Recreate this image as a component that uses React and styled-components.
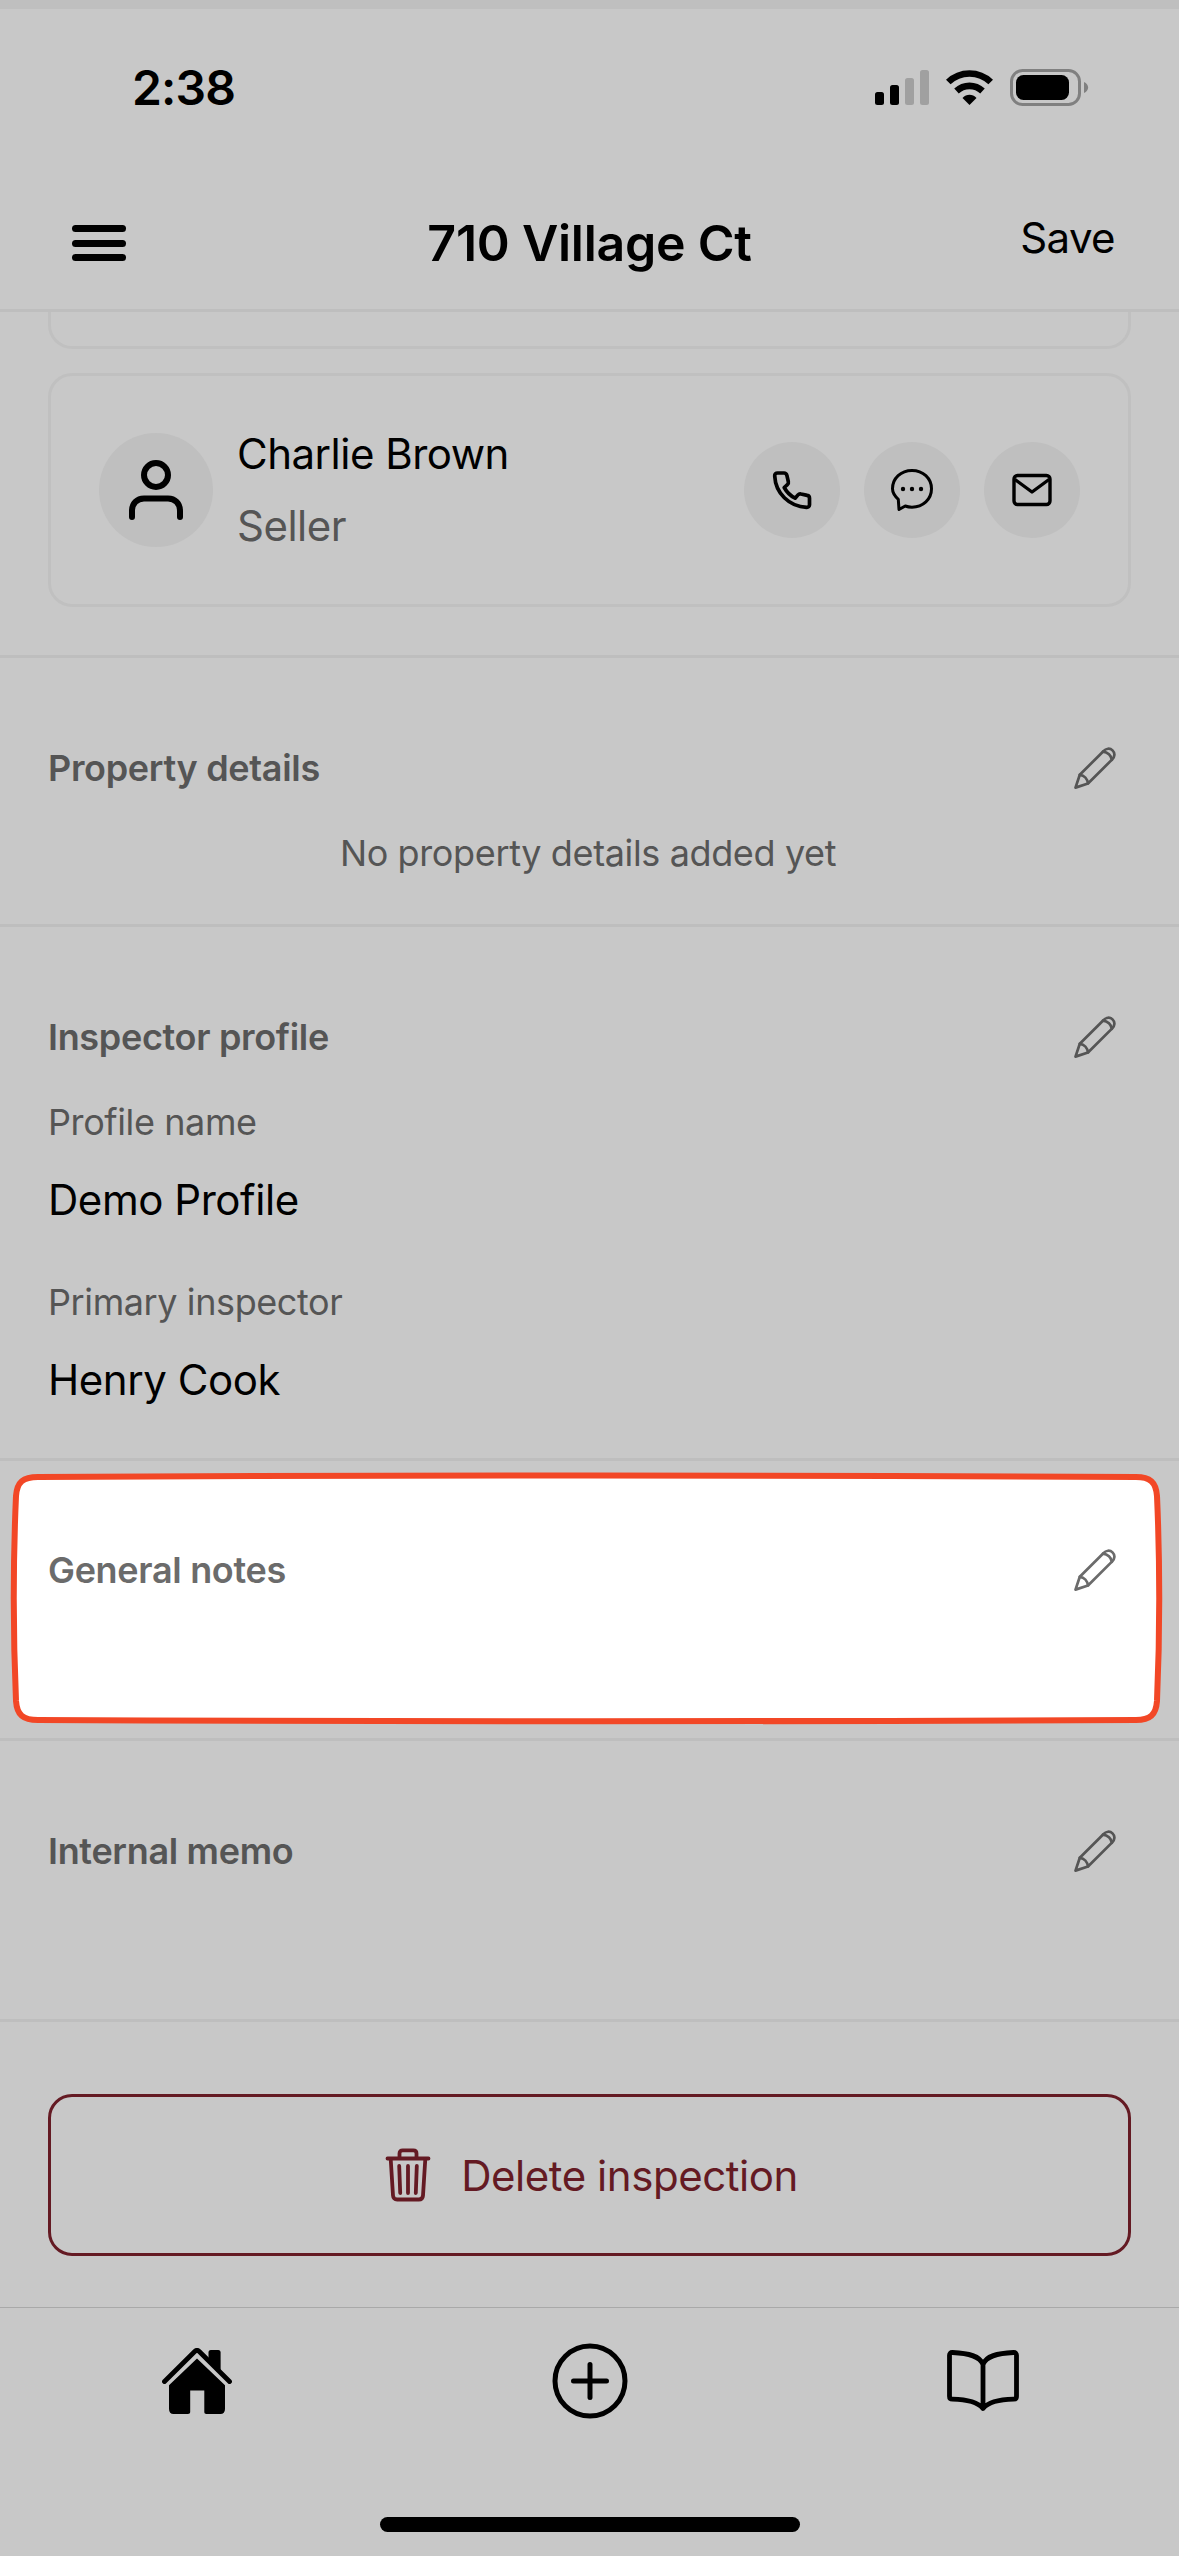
import React from 'react';
import styled, { createGlobalStyle, css } from 'styled-components';

const GlobalStyle = createGlobalStyle`
  * {
    box-sizing: border-box;
  }
  body {
    margin: 0;
    background: #c8c8c8;
  }
`;

const BLACK = '#000000';
const GREY = '#555555';
const LINE = '#bebebe';
const DANGER = '#641a23';

const Screen = styled.div`
  width: 1179px;
  height: 2556px;
  overflow: hidden;
  display: flex;
  flex-direction: column;
  background: #c8c8c8;
  border-top: 9px solid #bfbfbf;
  font-family: Inter, "Liberation Sans", sans-serif;
  color: ${BLACK};
`;

const StatusBar = styled.div`
  height: 158px;
  flex: none;
  display: flex;
  justify-content: space-between;
  padding: 50px 90px 0 132px;
`;

const Clock = styled.div`
  font-size: 48px;
  line-height: 58px;
  font-weight: 600;
  letter-spacing: -0.8px;
`;

const StatusIcons = styled.svg`
  display: block;
  width: 216px;
  height: 40px;
  margin-top: 9px;
`;

const Header = styled.header`
  height: 145px;
  flex: none;
  display: grid;
  grid-template-columns: 1fr auto 1fr;
  border-bottom: 3px solid ${LINE};
  padding: 0 64px;
`;

const MenuButton = styled.div`
  width: 54px;
  height: 36px;
  margin: 58px 0 0 8px;
  display: flex;
  flex-direction: column;
  justify-content: space-between;
`;

const MenuBar = styled.span`
  height: 7px;
  border-radius: 4px;
  background: ${BLACK};
`;

const Title = styled.h1`
  margin: 46px 0 0;
  font-size: 50px;
  line-height: 60px;
  font-weight: 600;
  letter-spacing: -0.25px;
`;

const SaveButton = styled.div`
  margin-top: 46px;
  justify-self: end;
  font-size: 42px;
  line-height: 50px;
  letter-spacing: -0.6px;
`;

const Content = styled.main`
  flex: none;
  height: 1995px;
  overflow: hidden;
`;

const People = styled.div`
  height: 346px;
  padding: 0 48px;
  border-bottom: 3px solid ${LINE};
  display: flex;
  flex-direction: column;
  gap: 24px;
`;

const Card = styled.div`
  border: 3px solid #c0c0c0;
  border-radius: 24px;
  height: 234px;
  flex: none;
  display: flex;
  align-items: center;
  padding: 0 48px;
  ${props => props.$cut && css`
    height: 37px;
    border-top: 0;
    border-radius: 0 0 24px 24px;
  `}
`;

const Bubble = styled.div`
  width: ${props => props.$size}px;
  height: ${props => props.$size}px;
  flex: none;
  border-radius: 50%;
  background: #bfbfbf;
  display: flex;
  align-items: center;
  justify-content: center;
`;

const Person = styled.div`
  flex: 1;
  padding-left: 24px;
  font-size: 42px;
  line-height: 72px;
  letter-spacing: -0.5px;
`;

const Role = styled.div`
  color: ${GREY};
`;

const Actions = styled.div`
  display: flex;
  gap: 24px;
`;

const Section = styled.section`
  height: ${props => props.$height}px;
  padding: ${props => props.$top || 83}px 48px 0;
  border-bottom: 3px solid ${LINE};
  position: relative;
`;

const SectionHead = styled.div`
  position: relative;
  display: flex;
  align-items: center;
  justify-content: space-between;
  height: 54px;
  padding-right: 15px;
  color: ${props => (props.$lit ? '#6b6b6b' : GREY)};
`;

const SectionTitle = styled.h2`
  margin: 0;
  font-size: 36px;
  line-height: 54px;
  font-weight: 600;
  letter-spacing: -0.32px;
`;

const Empty = styled.p`
  margin: 31px 3px 0 0;
  font-size: 36px;
  line-height: 54px;
  letter-spacing: -0.37px;
  text-align: center;
  color: ${GREY};
`;

const Label = styled.div`
  margin-top: 31px;
  font-size: 36px;
  line-height: 54px;
  letter-spacing: -0.4px;
  color: ${GREY};
`;

const Value = styled.div`
  margin: 21px 0 45px;
  font-size: 42px;
  line-height: 60px;
  letter-spacing: -0.45px;
`;

/* spotlight drawn behind the head of the highlighted section */
const Spotlight = styled.svg`
  position: absolute;
  left: 0;
  top: 0;
  width: 1179px;
  height: 280px;
`;

const DeleteButton = styled.div`
  height: 162px;
  margin: 72px 48px 0;
  padding-left: 4px;
  border: 3px solid ${DANGER};
  border-radius: 24px;
  color: ${DANGER};
  display: flex;
  align-items: center;
  justify-content: center;
  gap: 30px;
  font-size: 42px;
  letter-spacing: -0.45px;
`;

const TabBar = styled.nav`
  flex: none;
  height: 249px;
  border-top: 1px solid #a9a9a9;
  display: flex;
  flex-direction: column;
  align-items: center;
`;

const Tabs = styled.div`
  width: 100%;
  height: 146px;
  display: grid;
  grid-template-columns: repeat(3, 1fr);
  place-items: center;
`;

const HomeIndicator = styled.div`
  width: 420px;
  height: 15px;
  margin-top: 63px;
  border-radius: 8px;
  background: ${BLACK};
`;

const Icon = ({ w, h, stroke = 4, children }) => (
  <svg
    width={w}
    height={h}
    viewBox={`0 0 ${w} ${h}`}
    fill="none"
    stroke="currentColor"
    strokeWidth={stroke}
    strokeLinecap="round"
    strokeLinejoin="round"
  >
    {children}
  </svg>
);

const UserIcon = () => (
  <Icon w={54} h={60} stroke={6}>
    <circle cx="27" cy="15" r="12" />
    <path d="M3 57v-6c0-7.500 5-12.500 12-12.500h24c7 0 12 5 12 12.500v6" />
  </Icon>
);

const PhoneIcon = () => (
  <Icon w={40} h={40} stroke={3.7}>
    <path d="M5.500 3h6.500c1.500 0 2.500 1 2.900 2.400l1.400 6.200c.3 1.300 0 2.200-.9 3l-3.200 2.900c2.700 4.900 6 8.200 10.900 10.700l2.900-3.300c.8-.9 1.800-1.200 3-.9l6.200 1.400c1.500.3 2.300 1.300 2.300 2.800v6.500c0 1.600-1.200 2.700-2.800 2.600C17 36.500 3.500 23 2.700 5.800 2.600 4.200 3.800 3 5.500 3z" />
  </Icon>
);

const ChatIcon = () => (
  <Icon w={42} h={42} stroke={3}>
    <path d="M8 40.500l-.7-10.200C3.600 27 1.500 23.600 1.500 19.800 1.500 9.300 10 1.500 21 1.500s19.500 7.800 19.500 18.300S32 38.200 21 38.200c-2.500 0-4.700-.4-6.800-1.200z" />
    <g fill="currentColor" stroke="none">
      <circle cx="12" cy="20" r="2.200" />
      <circle cx="21" cy="20" r="2.200" />
      <circle cx="30" cy="20" r="2.200" />
    </g>
  </Icon>
);

const MailIcon = () => (
  <Icon w={40} h={34} stroke={3.4}>
    <rect x="2" y="2.500" width="36" height="29" rx="3.500" />
    <path d="M3 6.500l17 12.500 17-12.500" strokeLinecap="butt" />
  </Icon>
);

const PencilIcon = () => (
  <Icon w={42} h={42} stroke={2.7}>
    <path d="M1.500 40.600L5.800 27.800 29.400 4.200C32 1.300 35.900.8 38.500 3.400 41.200 6 40.900 9.700 38.200 12.400L14 36.500z" />
    <path d="M5.800 27.800c4.400.6 7.700 4 8.200 8.700M29 4.600c4.600.4 8.300 3.800 8.900 8.200" />
  </Icon>
);

const TrashIcon = () => (
  <Icon w={46} h={54} stroke={3.8}>
    <path d="M2.500 10.500h41M14.500 10V5.500c0-2 1.200-3.200 3.200-3.200h10.600c2 0 3.200 1.200 3.200 3.200V10" />
    <path d="M5.700 11l2.300 36.500c.2 2.600 1.600 4 4.200 4h21.600c2.600 0 4-1.400 4.200-4L40.300 11" />
    <path d="M14.200 18l1 27M23 18v27M31.800 18l-1 27" />
  </Icon>
);

const HomeIcon = () => (
  <Icon w={70} h={67} stroke={4.8}>
    <g fill="currentColor" stroke="none">
      <path d="M35 10.500l28 26.800V61c0 3-1.700 5-4.500 5H44.500c-1.500 0-2.200-.8-2.200-2.200V42.500H28.200v21.300c0 1.400-.8 2.200-2.300 2.200H11.500C8.700 66 7 64 7 61V37.300z" />
      <path d="M46.500 12V4.500c0-1.600.8-2.500 2.300-2.500h7.500c1.500 0 2.300.9 2.300 2.500V22z" />
    </g>
    <path d="M2.500 33.500L33 3.300c1.400-1.300 2.600-1.300 4 0l30.500 30.200" />
  </Icon>
);

const AddIcon = () => (
  <Icon w={76} h={76} stroke={5}>
    <circle cx="38" cy="38" r="35" />
    <path d="M38 21.500v33M21.500 38h33" />
  </Icon>
);

const BookIcon = () => (
  <Icon w={72} h={62} stroke={4.8}>
    <path d="M36 58.500V14.500C33 6 22 3.300 5.500 2.500 3.500 2.400 2.500 3.400 2.500 5.200v41c0 1.900 1 3 2.900 3 13.600.3 24.600 2 30.600 9.300 6-7.300 17-9 30.600-9.300 1.900 0 2.900-1.100 2.900-3v-41c0-1.800-1-2.800-3-2.700C50 3.300 39 6 36 14.500" />
  </Icon>
);

const sections = {
  property: 269,
  inspector: 534,
  notes: 280,
  memo: 281,
};

function EditableHead({ title, lit }) {
  return (
    <SectionHead $lit={lit}>
      <SectionTitle>{title}</SectionTitle>
      <PencilIcon />
    </SectionHead>
  );
}

export default function App() {
  return (
    <Screen>
      <GlobalStyle />
      <StatusBar>
        <Clock>2:38</Clock>
        <StatusIcons viewBox="873 68 216 40">
          <rect x="875" y="92" width="9" height="13" rx="2.500" />
          <rect x="890" y="85" width="9" height="20" rx="2.500" />
          <g fill="#a0a0a0">
            <rect x="905" y="78" width="9" height="27" rx="2.500" />
            <rect x="920" y="70" width="9" height="35" rx="2.500" />
          </g>
          <g fill="none" stroke="#000" strokeWidth="6.600">
            <path d="M948.300 82a30.500 30.500 0 0 1 42.400 0" />
            <path d="M956.500 91a19 19 0 0 1 26 0" />
          </g>
          <path d="M969.500 105l-7-7c4-4.200 10-4.200 14 0z" />
          <rect x="1011.500" y="70.500" width="68" height="34" rx="11" fill="none" stroke="#808080" strokeWidth="3" />
          <rect x="1016" y="75" width="53" height="25" rx="7.500" />
          <path d="M1084 82c5.500 2.500 5.500 8.500 0 11z" fill="#808080" />
        </StatusIcons>
      </StatusBar>

      <Header>
        <MenuButton>
          <MenuBar />
          <MenuBar />
          <MenuBar />
        </MenuButton>
        <Title>710 Village Ct</Title>
        <SaveButton>Save</SaveButton>
      </Header>

      <Content>
        <People>
          <Card $cut />
          <Card>
            <Bubble $size={114}><UserIcon /></Bubble>
            <Person>
              <div>Charlie Brown</div>
              <Role>Seller</Role>
            </Person>
            <Actions>
              <Bubble $size={96}><PhoneIcon /></Bubble>
              <Bubble $size={96}><ChatIcon /></Bubble>
              <Bubble $size={96}><MailIcon /></Bubble>
            </Actions>
          </Card>
        </People>

        <Section $height={sections.property}>
          <EditableHead title="Property details" />
          <Empty>No property details added yet</Empty>
        </Section>

        <Section $height={sections.inspector}>
          <EditableHead title="Inspector profile" />
          <Label>Profile name</Label>
          <Value>Demo Profile</Value>
          <Label>Primary inspector</Label>
          <Value>Henry Cook</Value>
        </Section>

        <Section $height={sections.notes} $top={82}>
          <Spotlight viewBox="0 1461 1179 280">
            <path
              d="M38 1477Q590 1474 1136 1477C1150 1477 1156 1482 1157 1496Q1161.500 1598 1157 1701C1156 1715 1150 1720 1136 1720Q590 1722.500 38 1720C23 1720 17 1715 16 1701Q11.500 1598 16 1496C17 1482 23 1477 38 1477Z"
              fill="#fff"
              stroke="#f24726"
              strokeWidth="6"
            />
          </Spotlight>
          <EditableHead title="General notes" lit />
        </Section>

        <Section $height={sections.memo}>
          <EditableHead title="Internal memo" />
        </Section>

        <DeleteButton>
          <TrashIcon />
          Delete inspection
        </DeleteButton>
      </Content>

      <TabBar>
        <Tabs>
          <HomeIcon />
          <AddIcon />
          <BookIcon />
        </Tabs>
        <HomeIndicator />
      </TabBar>
    </Screen>
  );
}
